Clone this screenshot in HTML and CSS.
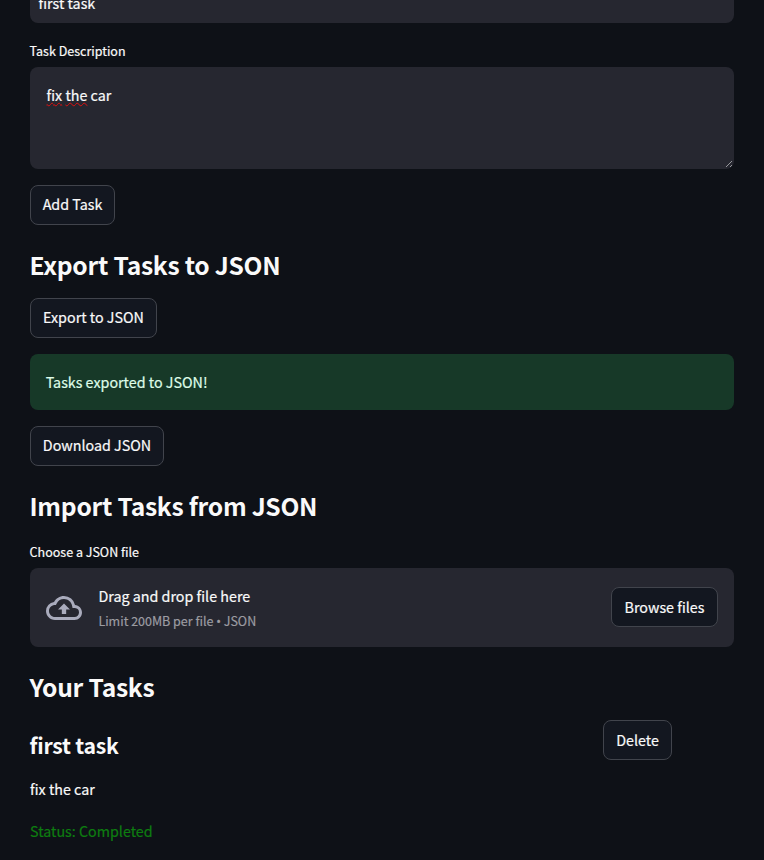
FILE: index.html
```html
<!DOCTYPE html>
<html lang="en">
<head>
<meta charset="utf-8">
<title>Tasks</title>
<link rel="stylesheet" href="styles.css">
</head>
<body>
<main class="page">
  <div class="input">first task</div>
  <div class="label label-desc">Task Description</div>
  <div class="textarea">
    <span class="typo">fix</span> <span class="typo">the</span> car
    <svg class="grip" width="8" height="8" viewBox="0 0 8 8"><path d="M1 7L7 1M5 7L7 5" stroke="#b4b4b8" stroke-width=".8" fill="none"/></svg>
  </div>
  <button class="btn btn-add">Add Task</button>
  <h2>Export Tasks to JSON</h2>
  <button class="btn btn-export">Export to JSON</button>
  <div class="alert">Tasks exported to JSON!</div>
  <button class="btn btn-download">Download JSON</button>
  <h2>Import Tasks from JSON</h2>
  <div class="label label-file">Choose a JSON file</div>
  <section class="uploader">
    <svg class="cloud" width="36" height="36" viewBox="0 0 24 24"><path fill="#a9abbc" d="M19.35 10.04A7.49 7.49 0 0 0 12 4C9.11 4 6.6 5.64 5.35 8.04A5.994 5.994 0 0 0 0 14c0 3.31 2.69 6 6 6h13c2.76 0 5-2.24 5-5 0-2.64-2.05-4.78-4.65-4.96zM19 18H6c-2.21 0-4-1.79-4-4 0-2.05 1.53-3.76 3.56-3.97l1.07-.11.5-.95A5.469 5.469 0 0 1 12 6c2.62 0 4.88 1.86 5.39 4.43l.3 1.5 1.53.11A2.98 2.98 0 0 1 22 15c0 1.65-1.35 3-3 3zM8 13h2.55v3h2.9v-3H16l-4-4z"/></svg>
    <div class="drop">
      <div class="drop-title">Drag and drop file here</div>
      <div class="drop-limit">Limit 200MB per file <span class="bullet">•</span> JSON</div>
    </div>
    <button class="btn btn-browse">Browse files</button>
  </section>
  <h2>Your Tasks</h2>
  <div class="task">
    <div class="task-body">
      <h3>first task</h3>
      <p>fix the car</p>
      <p class="status">Status: Completed</p>
    </div>
    <button class="btn btn-delete">Delete</button>
  </div>
</main>
</body>
</html>
```
FILE: styles.css
```css
* { box-sizing: border-box; }
body {
  margin: 0;
  height: 860px;
  overflow: hidden;
  background: #0e1117;
  color: #fafafa;
  font-family: "Noto Sans CJK SC", "Noto Sans", sans-serif;
  font-size: 14.3px;
  line-height: 24px;
  -webkit-text-stroke: 0.2px;
}
.page {
  display: flex;
  flex-direction: column;
  align-items: stretch;
  width: 704px;
  margin: -17px 0 0 30px;
}
.input {
  height: 40px;
  padding: 8px 8.5px;
  border-radius: 8px;
  background: #262730;
}
.label {
  font-size: 12.5px;
  line-height: 20px;
  text-indent: -0.4px;
}
.label-desc { margin: 18px 0 6px; }
.textarea {
  position: relative;
  height: 102px;
  padding: 16px 16.5px;
  border-radius: 8px;
  background: #262730;
}
.typo {
  text-decoration: underline wavy #e00f0f 1.4px;
  text-underline-offset: 0.5px;
  text-decoration-skip-ink: none;
}
.grip { position: absolute; right: 1px; bottom: 1px; }
.btn {
  height: 40px;
  padding: 0 0 2px;
  border: 1px solid #41444c;
  border-radius: 8px;
  background: #131720;
  color: #fafafa;
  font: inherit;
  white-space: nowrap;
}
.btn-add { width: 85px; margin-top: 16px; }
.btn-export { width: 127px; }
.btn-download { width: 134px; }
.btn-browse { width: 107px; margin: 0 0 1px auto; padding-bottom: 0; }
.btn-delete { width: 69px; padding-bottom: 0; }
h2 {
  height: 34px;
  margin: 22px 0 17px;
  font-size: 24.6px;
  line-height: 34px;
  font-weight: 700;
  letter-spacing: -0.26px;
  text-indent: -0.5px;
  -webkit-text-stroke: 0;
}
.alert {
  height: 56px;
  margin: 16px 0;
  padding: 16px 15.7px;
  border-radius: 8px;
  background: #173928;
  color: #dffde9;
}
.label-file { margin: 3px 0 6px; }
.uploader {
  display: flex;
  align-items: center;
  height: 79px;
  padding: 0 16px;
  border-radius: 8px;
  background: #262730;
}
.cloud { margin-top: 1px; }
.drop { margin: 1px 0 0 16.4px; }
.drop-limit {
  color: #9c9ca2;
  font-size: 12.5px;
  line-height: 25px;
}
.bullet {
  font-family: "Noto Sans", sans-serif;
  line-height: 1;
}
.task { display: flex; align-items: flex-start; }
.task-body { width: 573px; flex: none; }
h3 {
  margin: 10px 0 17px;
  font-size: 21.2px;
  line-height: 30px;
  font-weight: 700;
  letter-spacing: -0.25px;
  text-indent: -0.4px;
  -webkit-text-stroke: 0;
}
p { margin: 0 0 18px; }
.status { color: #0d7d10; }
```
